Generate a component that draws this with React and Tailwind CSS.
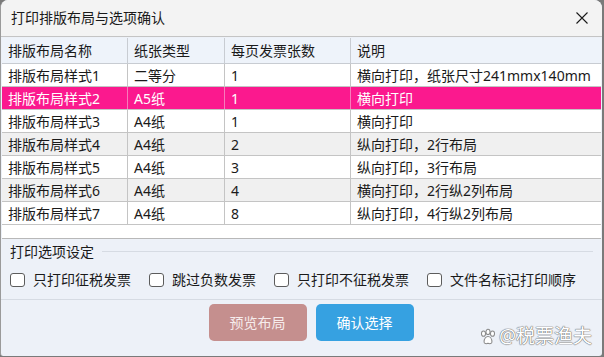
import React from 'react';

const ROWS = [
  ['排版布局样式1', '二等分', '1', '横向打印，纸张尺寸241mmx140mm'],
  ['排版布局样式2', 'A5纸', '1', '横向打印'],
  ['排版布局样式3', 'A4纸', '1', '横向打印'],
  ['排版布局样式4', 'A4纸', '2', '纵向打印，2行布局'],
  ['排版布局样式5', 'A4纸', '3', '纵向打印，3行布局'],
  ['排版布局样式6', 'A4纸', '4', '横向打印，2行纵2列布局'],
  ['排版布局样式7', 'A4纸', '8', '纵向打印，4行纵2列布局'],
];

const HEADERS = ['排版布局名称', '纸张类型', '每页发票张数', '说明'];

const OPTIONS = ['只打印征税发票', '跳过负数发票', '只打印不征税发票', '文件名标记打印顺序'];

const COLS = 'grid grid-cols-[126px_97px_126px_1fr]';

function Checkbox({ label }) {
  return (
    <label className="flex items-center gap-[8px]">
      <span className="w-[15px] h-[14px] rounded-[3px] border border-[#5c5c5c] bg-white" />
      <span>{label}</span>
    </label>
  );
}

function Paw() {
  return (
    <svg width="18" height="18" viewBox="0 0 16 16" className="mr-[2px]">
      <g fill="#fff" stroke="#8a8a8a" strokeWidth="0.9">
        <ellipse cx="4" cy="5" rx="1.8" ry="2.3" />
        <ellipse cx="8" cy="3.5" rx="1.8" ry="2.3" />
        <ellipse cx="12" cy="5" rx="1.8" ry="2.3" />
        <path d="M4.5 12.5 C4.5 9 6.5 7.5 8 7.5 C9.5 7.5 11.5 9 11.5 12.5 C11.5 14 9.5 14.2 8 13.6 C6.5 14.2 4.5 14 4.5 12.5 Z" />
      </g>
    </svg>
  );
}

export default function App() {
  return (
    <div className="w-[604px] h-[357px] bg-[#7a7a7a] overflow-hidden font-['Noto_Sans','Noto_Sans_CJK_SC',sans-serif] text-[14px] text-[#1a1a1a]">
      <div className="w-[602px] h-[356px] bg-[#edf1f8] rounded-t-[8px] rounded-b-[3px] flex flex-col overflow-hidden border-l border-[#9a9a9a]">
        {/* Title bar */}
        <div className="h-[37px] shrink-0 bg-[#f3f3f3] border-b border-[#c4c4c4] flex items-center justify-between pl-[10px] pr-[14px]">
          <span className="leading-none">打印排版布局与选项确认</span>
          <svg width="12" height="12" viewBox="0 0 12 12">
            <path d="M0.5 0.5 L11.5 11.5 M11.5 0.5 L0.5 11.5" stroke="#1a1a1a" strokeWidth="1.1" />
          </svg>
        </div>

        {/* Table */}
        <div className="mx-[1px] mt-[1px] h-[201px] shrink-0 bg-[#fafafa] border-b border-[#b8b8b8] flex flex-col">
          <div className={`${COLS} h-[26px] bg-[#eef3fa] border-b border-[#c8ccd2]`}>
            {HEADERS.map((h, i) => (
              <div key={h} className={`flex items-center pl-[6px] ${i < 3 ? 'border-r border-[#c8ccd2]' : ''}`}>
                {h}
              </div>
            ))}
          </div>
          {ROWS.map((row, r) => {
            const selected = r === 1;
            const bg = selected ? 'bg-[#fb198e] text-white' : r % 2 === 1 ? 'bg-[#f0f0f0]' : 'bg-white';
            return (
              <div key={r} className={`${COLS} h-[23px] border-b border-[#c4c4c4] ${bg}`}>
                {row.map((cell, i) => (
                  <div
                    key={i}
                    className={`flex items-center pl-[6px] whitespace-nowrap overflow-hidden ${i < 3 ? (selected ? 'border-r border-[#f77bbb]' : 'border-r border-[#c4c4c4]') : ''}`}
                  >
                    {cell}
                  </div>
                ))}
              </div>
            );
          })}
          <div className="flex-1 bg-white" />
        </div>

        {/* Options group */}
        <div className="h-[61px] shrink-0 px-[9px] border-b border-[#d6dbe3] flex flex-col">
          <div className="flex items-center gap-[8px] h-[24px]">
            <span>打印选项设定</span>
            <span className="flex-1 h-px bg-[#d6dbe3]" />
          </div>
          <div className="flex items-center gap-[18px] mt-[6px]">
            {OPTIONS.map((o) => (
              <Checkbox key={o} label={o} />
            ))}
          </div>
        </div>

        {/* Buttons */}
        <div className="relative flex-1 flex justify-center gap-[9px] pt-[4px] pl-[19px]">
          <button className="w-[98px] h-[37px] rounded-[5px] bg-[#c58f8e] text-[#f6ecec]">预览布局</button>
          <button className="w-[98px] h-[37px] rounded-[5px] bg-[#36a1e1] text-white">确认选择</button>
          <div className="absolute right-[10px] bottom-[10px] flex items-center text-[19px] leading-none text-white [text-shadow:0_0_1px_#6f6f6f,0_0_1px_#6f6f6f,0_0_1px_#6f6f6f]">
            <Paw />
            <span>@税票渔夫</span>
          </div>
        </div>
      </div>
    </div>
  );
}
